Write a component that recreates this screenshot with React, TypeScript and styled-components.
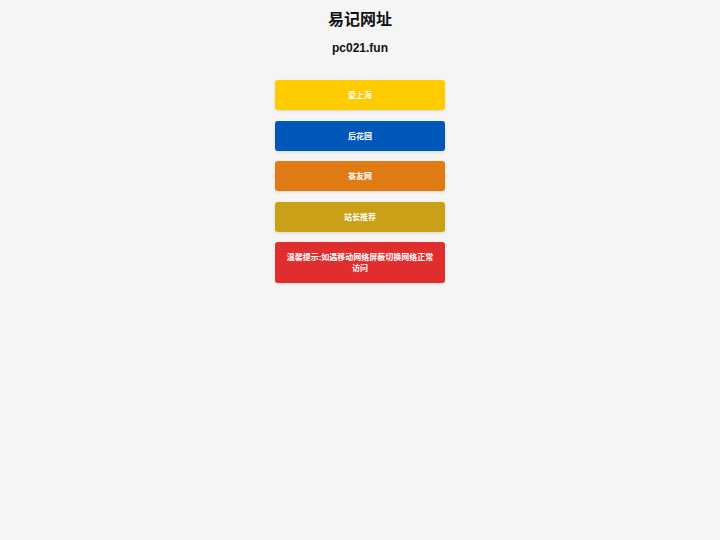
import styled, { createGlobalStyle } from 'styled-components';

const GlobalStyle = createGlobalStyle`
  html, body {
    margin: 0;
    padding: 0;
    background: #f5f5f5;
  }
  body {
    font-family: "Liberation Sans", Arial, "Noto Sans CJK SC", sans-serif;
  }
`;

const Page = styled.div`
  min-height: 540px;
  display: flex;
  flex-direction: column;
  align-items: center;
  padding-top: 10px;
  box-sizing: border-box;
`;

const Title = styled.h1`
  margin: 0;
  font-size: 16px;
  line-height: 20px;
  font-weight: bold;
  color: #111;
`;

const Domain = styled.h2`
  margin: 10px 0 0;
  font-size: 12px;
  line-height: 16px;
  font-weight: bold;
  color: #111;
`;

const LinkList = styled.div`
  margin-top: 24px;
  width: 170px;
  display: flex;
  flex-direction: column;
  gap: 10.5px;
`;

const LinkButton = styled.a<{ $bg: string }>`
  display: flex;
  align-items: center;
  justify-content: center;
  text-align: center;
  box-sizing: border-box;
  padding: 10px 10px 9px;
  min-height: 30px;
  border-radius: 3px;
  background: ${(p) => p.$bg};
  color: #fff;
  font-size: 8px;
  line-height: 11px;
  font-weight: bold;
  text-decoration: none;
  box-shadow: 0 1px 3px rgba(0, 0, 0, 0.12);
`;

const links = [
  { label: '爱上海', bg: '#ffcc00' },
  { label: '后花园', bg: '#0057b8' },
  { label: '茶友网', bg: '#e07b14' },
  { label: '站长推荐', bg: '#c9a016' },
  { label: '温馨提示:如遇移动网络屏蔽切换网络正常访问', bg: '#e02d2d' },
];

export default function App() {
  return (
    <>
      <GlobalStyle />
      <Page>
        <Title>易记网址</Title>
        <Domain>pc021.fun</Domain>
        <LinkList>
          {links.map((l) => (
            <LinkButton key={l.label} $bg={l.bg} href="#">
              {l.label}
            </LinkButton>
          ))}
        </LinkList>
      </Page>
    </>
  );
}
